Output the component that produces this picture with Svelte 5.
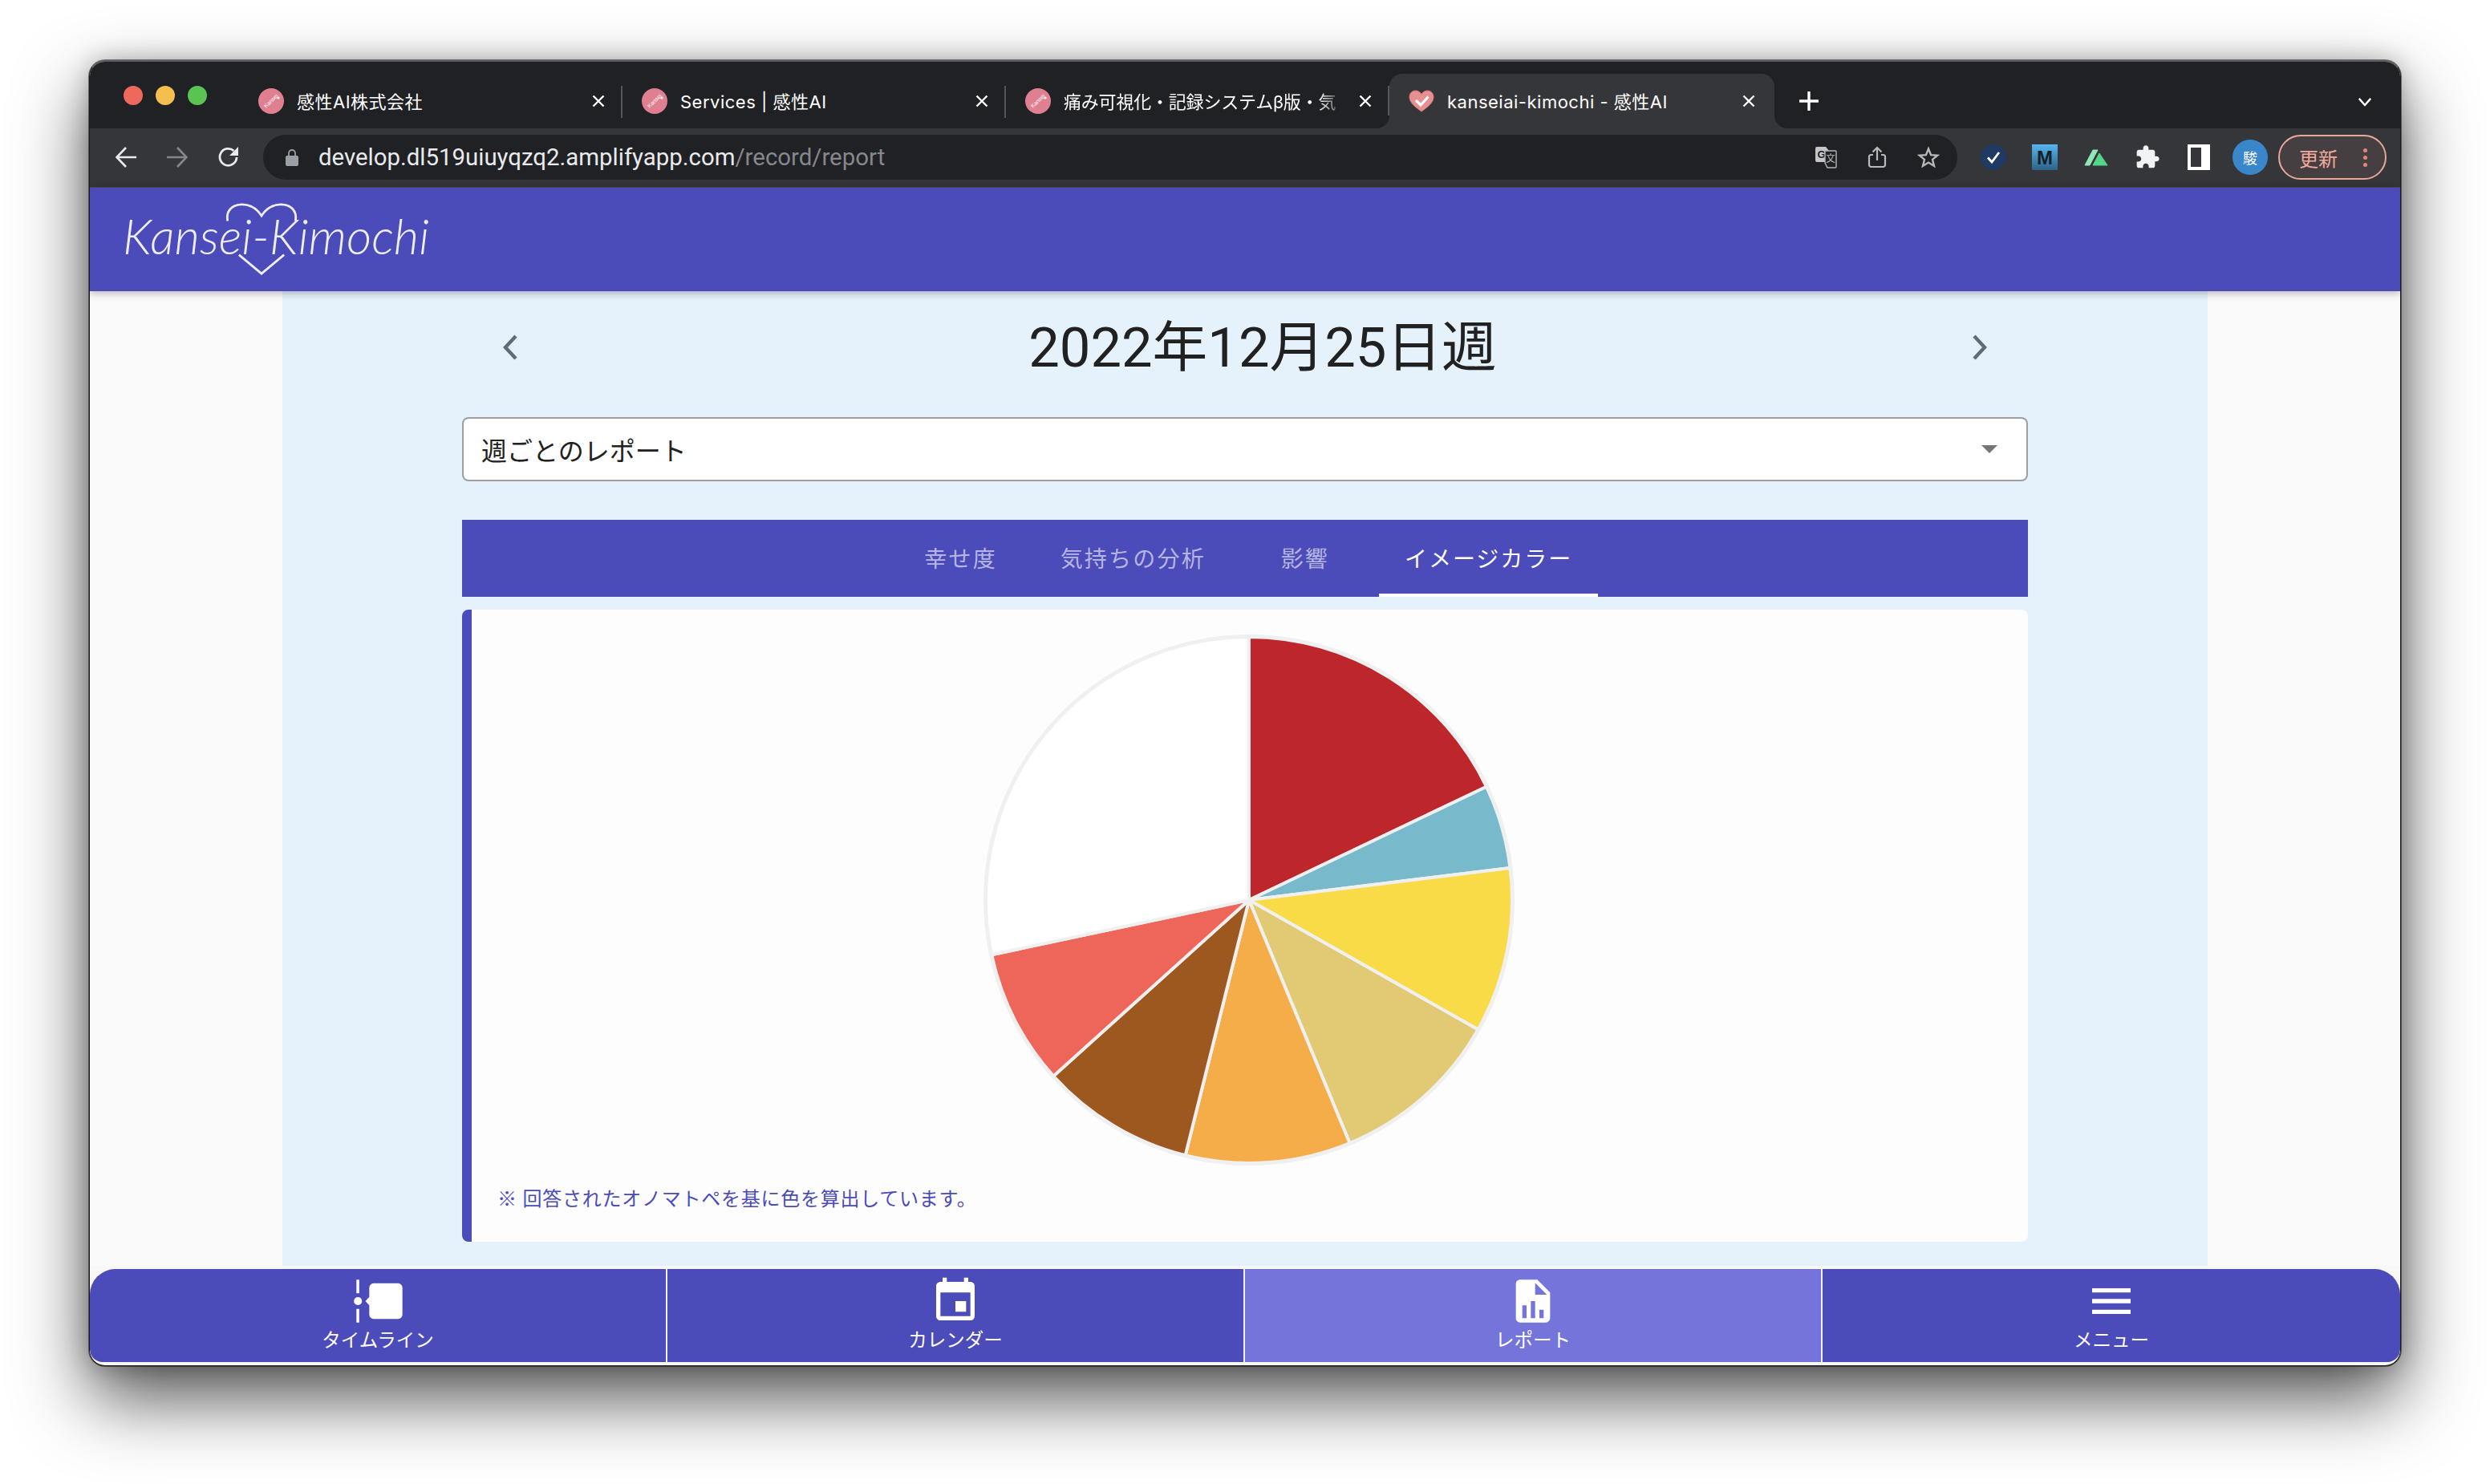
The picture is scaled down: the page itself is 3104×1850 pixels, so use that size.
<script lang="ts">
  const tabs = [
    { title: '感性AI株式会社', fade: false },
    { title: 'Services | 感性AI', fade: false },
    { title: '痛み可視化・記録システムβ版・気', fade: true }
  ];

  const reportTabs = ['幸せ度', '気持ちの分析', '影響', 'イメージカラー'];

  const navItems = [
    { label: 'タイムライン', active: false, kind: 'timeline' },
    { label: 'カレンダー', active: false, kind: 'calendar' },
    { label: 'レポート', active: true, kind: 'report' },
    { label: 'メニュー', active: false, kind: 'menu' }
  ];

  // degrees clockwise from 12 o'clock, each slice ends where the next begins
  const slices = [
    { end: 64.5, color: '#bd272b' },
    { end: 83, color: '#78bacb' },
    { end: 119.5, color: '#f9db47' },
    { end: 157.5, color: '#e2c973' },
    { end: 194, color: '#f4ad49' },
    { end: 228, color: '#9c581f' },
    { end: 258, color: '#ee665a' },
    { end: 360, color: '#ffffff' }
  ];

  const R = 328;

  function point(deg: number): string {
    const a = (deg * Math.PI) / 180;
    return `${(R * Math.sin(a)).toFixed(2)} ${(-R * Math.cos(a)).toFixed(2)}`;
  }

  function slicePath(start: number, end: number): string {
    const large = end - start > 180 ? 1 : 0;
    return `M0 0L${point(start)}A${R} ${R} 0 ${large} 1 ${point(end)}Z`;
  }
</script>

<div class="desktop">
  <div class="window">
    <div class="tabstrip">
      <div class="lights">
        <span class="light red"></span>
        <span class="light yellow"></span>
        <span class="light green"></span>
      </div>
      {#each tabs as tab}
        <div class="tab">
          <svg class="favicon" viewBox="0 0 32 32">
            <circle cx="16" cy="16" r="16" fill="#e07f90" />
            <text x="16" y="18" class="fav-text" transform="rotate(-45 16 16)">Kansei</text>
            <circle cx="25" cy="12" r="1.6" fill="#fff" />
          </svg>
          <span class="tab-title" class:fade={tab.fade}>{tab.title}</span>
          <svg class="tab-close" viewBox="0 0 16 16">
            <path d="M1.5 1.5l13 13M14.5 1.5l-13 13" stroke="#fff" stroke-width="2.4" />
          </svg>
        </div>
      {/each}
      <div class="tab current">
        <svg class="favicon" viewBox="0 0 32 32">
          <path d="M16 29C9 24 1 18 1 11c0-5 3.6-8 7.5-8 3.2 0 5.7 1.6 7.5 4.5C17.8 4.6 20.3 3 23.5 3 27.4 3 31 6 31 11c0 7-8 13-15 18z" fill="#e88f90" stroke="#d9777a" stroke-width="1" />
          <path d="M9 15l6 6 9.5-10.5" fill="none" stroke="#fff" stroke-width="3.2" />
        </svg>
        <span class="tab-title">kanseiai-kimochi - 感性AI</span>
        <svg class="tab-close" viewBox="0 0 16 16">
          <path d="M1.5 1.5l13 13M14.5 1.5l-13 13" stroke="#fff" stroke-width="2.4" />
        </svg>
      </div>
      <svg class="new-tab" viewBox="0 0 24 24">
        <path d="M12 1v22M1 12h22" stroke="#fff" stroke-width="3.4" stroke-linecap="round" />
      </svg>
      <svg class="tab-menu" viewBox="0 0 20 14">
        <path d="M2 3l8 9 8-9" fill="none" stroke="#fff" stroke-width="2.6" />
      </svg>
    </div>

    <div class="toolbar">
      <svg class="tool-icon" viewBox="0 0 28 28">
        <path d="M27 14H3M14 2L2.5 14 14 26" fill="none" stroke="#e8eaed" stroke-width="2.6" />
      </svg>
      <svg class="tool-icon" viewBox="0 0 28 28">
        <path d="M1 14h24M14 2l11.5 12L14 26" fill="none" stroke="#85878a" stroke-width="2.6" />
      </svg>
      <svg class="tool-icon" viewBox="0 0 28 28">
        <path d="M24 14a10.5 10.5 0 1 1-3.5-8" fill="none" stroke="#e8eaed" stroke-width="2.8" />
        <path d="M26 1v11H15z" fill="#e8eaed" />
      </svg>
      <div class="omnibox">
        <svg class="lock" viewBox="0 0 16 22">
          <path d="M4 9V6a4 4 0 0 1 8 0v3" fill="none" stroke="#9aa0a6" stroke-width="1.8" />
          <rect y="9" width="16" height="13" rx="2" fill="#9aa0a6" />
        </svg>
        <span class="url">develop.dl519uiuyqzq2.amplifyapp.com<span class="path">/record/report</span></span>
        <svg class="omni-icon" viewBox="0 0 28 28">
          <path d="M3 1h11l4 5v14H3a2 2 0 0 1-2-2V3a2 2 0 0 1 2-2z" fill="#c4c5c6" />
          <text x="8.5" y="15" class="g-mark">G</text>
          <path d="M13 6h13a1 1 0 0 1 1 1v19a1 1 0 0 1-1 1H16l-3-6z" fill="#202124" stroke="#b4b5b6" stroke-width="1.4" />
          <text x="20" y="20" class="bun-mark">文</text>
        </svg>
        <svg class="omni-icon" viewBox="0 0 28 28">
          <path d="M9 11H6.5A2.5 2.5 0 0 0 4 13.5v10A2.5 2.5 0 0 0 6.5 26h15a2.5 2.5 0 0 0 2.5-2.5v-10a2.5 2.5 0 0 0-2.5-2.5H19M14 18V2M8.5 7.5L14 2l5.5 5.5" fill="none" stroke="#b8b9ba" stroke-width="2.2" />
        </svg>
        <svg class="omni-icon" viewBox="0 0 28 28">
          <path d="M14 3.5l3.1 7.6 8.2.6-6.3 5.2 2 8-7-4.300-7 4.300 2-8-6.300-5.200 8.200-.6z" fill="none" stroke="#b8b9ba" stroke-width="2.4" />
        </svg>
      </div>
      <div class="extensions">
        <svg class="ext" viewBox="0 0 32 32">
          <circle cx="16" cy="16" r="16" fill="#1f3a63" />
          <path d="M9 16.5l5 5.5 9-12" fill="none" stroke="#fff" stroke-width="2.8" />
        </svg>
        <svg class="ext" viewBox="0 0 32 32">
          <defs>
            <linearGradient id="mdn" x1="0" y1="0" x2="0" y2="1">
              <stop offset="0" stop-color="#57b5ef" />
              <stop offset="1" stop-color="#2c6387" />
            </linearGradient>
          </defs>
          <rect width="32" height="32" fill="url(#mdn)" />
          <text x="16" y="25" class="m-mark">M</text>
        </svg>
        <svg class="ext" viewBox="0 0 32 32">
          <path d="M2 26L12 7h6L8 26z" fill="#92e5b6" stroke="#92e5b6" stroke-linejoin="round" />
          <path d="M12 26l8-15 10 15z" fill="#52d688" stroke="#52d688" stroke-linejoin="round" />
        </svg>
        <svg class="ext" viewBox="0 0 24 24">
          <path d="M20.5 11H19V7c0-1.1-.9-2-2-2h-4V3.5C13 2.12 11.88 1 10.5 1S8 2.12 8 3.5V5H4c-1.1 0-1.99.9-1.99 2v3.8H3.5c1.49 0 2.7 1.21 2.7 2.7s-1.21 2.7-2.7 2.7H2V20c0 1.1.9 2 2 2h3.8v-1.5c0-1.49 1.21-2.7 2.7-2.7 1.49 0 2.7 1.21 2.7 2.7V22H17c1.1 0 2-.9 2-2v-4h1.500c1.38 0 2.500-1.120 2.500-2.500S21.880 11 20.500 11z" fill="#f1f3f4" />
        </svg>
        <svg class="ext" viewBox="0 0 32 32">
          <path d="M2 0h28v32H2z M6 4v24h13V4z" fill="#fff" fill-rule="evenodd" />
        </svg>
        <span class="avatar">駿</span>
      </div>
      <div class="update">
        <span>更新</span>
        <span class="dots"><i></i><i></i><i></i></span>
      </div>
    </div>

    <div class="page">
      <header class="app-header">
        <div class="logo">
          <svg class="logo-heart" viewBox="0 0 96 96">
            <path d="M3 24C0 10 10 2 22 2c11 0 20 6 26 15C54 8 63 2 74 2c12 0 22 8 19 22" fill="none" stroke="#eeeef8" stroke-width="3" />
            <path d="M18 69l30 25 30-25" fill="none" stroke="#eeeef8" stroke-width="3" />
          </svg>
          <span class="logo-text">Kansei-Kimochi</span>
        </div>
      </header>

      <div class="body">
        <main class="content">
          <div class="week">
            <svg class="chevron" viewBox="0 0 20 32">
              <path d="M17 2L4 16l13 14" fill="none" stroke="#5f6b76" stroke-width="4.4" />
            </svg>
            <h1>2022年12月25日週</h1>
            <svg class="chevron" viewBox="0 0 20 32">
              <path d="M3 2l13 14L3 30" fill="none" stroke="#5f6b76" stroke-width="4.4" />
            </svg>
          </div>

          <div class="select">
            <span>週ごとのレポート</span>
            <span class="caret"></span>
          </div>

          <nav class="report-tabs">
            {#each reportTabs as name, i}
              <span class="report-tab" class:selected={i === 3}>{name}</span>
            {/each}
          </nav>

          <section class="card">
            <svg class="pie" viewBox="-332 -332 664 664">
              <circle r={R} fill="#fff" stroke="#f0f0f0" stroke-width="6" />
              {#each slices as s, i}
                <path d={slicePath(i === 0 ? 0 : slices[i - 1].end, s.end)} fill={s.color} stroke="#f0f0f0" stroke-width="4" stroke-linejoin="round" />
              {/each}
            </svg>
            <p class="note">※ 回答されたオノマトペを基に色を算出しています。</p>
          </section>
        </main>
      </div>

      <footer class="bottom-nav">
        {#each navItems as item}
          <div class="nav-item" class:active={item.active}>
            <svg class="nav-icon" viewBox="0 0 24 24" fill="#fff">
              {#if item.kind === 'timeline'}
                <path d="M2 2h1.3v6.3H2zM2 15.7h1.3V22H2z" />
                <circle cx="2.7" cy="12" r="1.9" />
                <path d="M10 3.7h11.5a2 2 0 0 1 2 2v12.6a2 2 0 0 1-2 2H10a2 2 0 0 1-2-2v-4.300L6.200 12 8 10V5.700a2 2 0 0 1 2-2z" />
              {:else if item.kind === 'calendar'}
                <path d="M17 12h-5v5h5v-5zM16 1v2H8V1H6v2H5c-1.11 0-1.99.9-1.99 2L3 19c0 1.1.89 2 2 2h14c1.1 0 2-.9 2-2V5c0-1.1-.9-2-2-2h-1V1h-2zm3 18H5V8h14v11z" />
              {:else if item.kind === 'report'}
                <path d="M13 9h5.5L13 3.5V9M6 2h8l6 6v12a2 2 0 0 1-2 2H6c-1.11 0-2-.9-2-2V4c0-1.11.89-2 2-2m1 18h2v-6H7v6m4 0h2v-8h-2v8m4 0h2v-4h-2v4z" />
              {:else}
                <path d="M3 18h18v-2H3v2zm0-5h18v-2H3v2zm0-7v2h18V6H3z" />
              {/if}
            </svg>
            <span class="nav-label">{item.label}</span>
          </div>
        {/each}
      </footer>
    </div>
  </div>
</div>

<style>
  :global(body) {
    margin: 0;
    background: #fff;
    font-family: Roboto, 'Noto Sans CJK JP', sans-serif;
  }

  .desktop {
    box-sizing: border-box;
    height: 1850px;
    padding: 75px 0 0 111px;
    overflow: hidden;
    background: #fff;
  }

  .window {
    box-sizing: border-box;
    width: 2882px;
    height: 1628px;
    display: flex;
    flex-direction: column;
    overflow: hidden;
    border: 1px solid #1a1a1a;
    border-top: 2px solid #5c5d60;
    border-radius: 20px;
    background: #f7f7f7;
    box-shadow:
      0 0 0 1px rgba(0, 0, 0, 0.45),
      0 0 30px rgba(0, 0, 0, 0.25),
      0 40px 90px rgba(0, 0, 0, 0.68);
  }

  .tabstrip {
    flex: 0 0 83px;
    display: flex;
    align-items: flex-start;
    background: #202124;
    color: #fff;
    font-family: Inter, 'Noto Sans CJK JP', sans-serif;
    font-size: 22px;
    letter-spacing: 0.5px;
  }

  .lights {
    flex: 0 0 186px;
    box-sizing: border-box;
    padding: 30px 0 0 42px;
    display: flex;
    gap: 16px;
  }

  .light {
    width: 24px;
    height: 24px;
    border-radius: 50%;
  }

  .red {
    background: #ee685b;
  }

  .yellow {
    background: #f5bf4f;
  }

  .green {
    background: #5ac452;
  }

  .tab {
    flex: 0 0 478px;
    min-width: 0;
    box-sizing: border-box;
    height: 83px;
    padding: 15px 24px 0;
    display: flex;
    align-items: center;
    gap: 16px;
    position: relative;
  }

  .tab:not(.current)::after {
    content: '';
    position: absolute;
    right: 0;
    top: 30px;
    height: 40px;
    width: 2px;
    background: #55565a;
  }

  .tab.current {
    flex-basis: 480px;
    background: #35363a;
    border-radius: 16px 16px 0 0;
    margin-top: 15px;
    height: 68px;
    padding-top: 0;
  }

  /* flared feet of the active tab */
  .tab.current::before,
  .tab.current::after {
    content: '';
    position: absolute;
    bottom: 0;
    width: 16px;
    height: 16px;
  }

  .tab.current::before {
    left: -16px;
    background: radial-gradient(circle at 0 0, #202124 15.5px, #35363a 16.5px);
  }

  .tab.current::after {
    right: -16px;
    background: radial-gradient(circle at 100% 0, #202124 15.5px, #35363a 16.5px);
  }

  .favicon {
    flex: none;
    width: 32px;
    height: 32px;
  }

  .fav-text {
    font-family: 'Liberation Sans', sans-serif;
    font-size: 7px;
    letter-spacing: 0;
    fill: #fff;
    text-anchor: middle;
  }

  .tab-title {
    flex: 1;
    min-width: 0;
    margin-bottom: 3px;
    white-space: nowrap;
    overflow: hidden;
  }

  .tab-title.fade {
    letter-spacing: -0.2px;
    mask-image: linear-gradient(to right, #000 90%, transparent 100%);
  }

  .tab-close {
    flex: none;
    width: 16px;
    height: 16px;
    margin-right: -2px;
  }

  .tab.current .tab-close {
    margin-right: 0;
  }

  .new-tab {
    flex: none;
    width: 24px;
    height: 24px;
    margin: 37px 0 0 31px;
  }

  .tab-menu {
    flex: none;
    width: 18px;
    height: 13px;
    margin: 43px 35px 0 auto;
  }

  .toolbar {
    flex: 0 0 73px;
    box-sizing: border-box;
    padding: 8px 0 9px 31px;
    display: flex;
    align-items: center;
    background: #35363a;
    border-bottom: 1px solid #4d4e52;
  }

  .tool-icon {
    flex: none;
    width: 28px;
    height: 28px;
    margin-right: 36px;
  }

  .omnibox {
    flex: 0 0 2112px;
    height: 56px;
    margin-left: -7px;
    box-sizing: border-box;
    padding: 0 22px 0 28px;
    display: flex;
    align-items: center;
    border-radius: 28px;
    background: #202124;
  }

  .lock {
    flex: none;
    width: 16px;
    height: 22px;
  }

  .url {
    flex: 1;
    margin-left: 25px;
    font-size: 29.4px;
    color: #e8eaed;
    white-space: nowrap;
  }

  .path {
    color: #85878a;
  }

  .omni-icon {
    flex: none;
    width: 28px;
    height: 28px;
    margin-left: 36px;
  }

  .g-mark {
    font-family: 'Liberation Sans', sans-serif;
    font-size: 13px;
    font-weight: 700;
    fill: #202124;
    text-anchor: middle;
  }

  .bun-mark {
    font-family: 'Noto Sans CJK JP', sans-serif;
    font-size: 12px;
    fill: #b4b5b6;
    text-anchor: middle;
  }

  .m-mark {
    font-family: 'Liberation Sans', sans-serif;
    font-size: 24px;
    font-weight: 700;
    fill: #14212b;
    text-anchor: middle;
  }

  .extensions {
    margin-left: 29px;
    display: flex;
    align-items: center;
    gap: 32px;
  }

  .ext {
    flex: none;
    width: 32px;
    height: 32px;
  }

  .avatar {
    width: 44px;
    height: 44px;
    margin-left: -6px;
    border-radius: 50%;
    background: #3a86cb;
    color: #fff;
    font-size: 18px;
    display: flex;
    align-items: center;
    justify-content: center;
  }

  .update {
    flex: none;
    box-sizing: border-box;
    width: 135px;
    height: 56px;
    margin-left: 13px;
    padding: 0 22px 0 24px;
    display: flex;
    align-items: center;
    justify-content: space-between;
    border: 2px solid #e8a79c;
    border-radius: 28px;
    background: #463f42;
    color: #efa99d;
    font-size: 24px;
  }

  .dots {
    display: flex;
    flex-direction: column;
    gap: 4px;
  }

  .dots i {
    width: 5px;
    height: 5px;
    border-radius: 50%;
    background: #e5857a;
  }

  .page {
    flex: 1;
    min-height: 0;
    display: flex;
    flex-direction: column;
  }

  .app-header {
    flex: 0 0 129px;
    position: relative;
    z-index: 1;
    box-sizing: border-box;
    padding-left: 41px;
    display: flex;
    align-items: center;
    background: #4b4bb9;
    box-shadow: 0 2px 10px rgba(0, 0, 0, 0.3);
  }

  .logo {
    position: relative;
    height: 129px;
    display: flex;
    align-items: center;
  }

  .logo-heart {
    position: absolute;
    left: 128px;
    top: 17px;
    width: 90px;
    height: 94px;
  }

  .logo-text {
    position: relative;
    top: -5px;
    font-family: Lato, sans-serif;
    font-style: italic;
    font-weight: 300;
    font-size: 60.8px;
    color: #eeeef8;
  }

  .body {
    flex: 1;
    min-height: 0;
    display: flex;
    justify-content: center;
    background: #fafafa;
  }

  .content {
    box-sizing: border-box;
    width: 2400px;
    padding: 0 224px;
    background: #e5f1fb;
    display: flex;
    flex-direction: column;
  }

  .week {
    height: 157px;
    display: flex;
    align-items: center;
    justify-content: space-between;
    box-sizing: border-box;
    padding: 0 50px 18px 50px;
  }

  .chevron {
    flex: none;
    width: 20px;
    height: 32px;
  }

  h1 {
    margin: 0 0 12px 44px;
    font-size: 68.7px;
    font-weight: 400;
    color: #212121;
    white-space: nowrap;
  }

  .select {
    flex: 0 0 80px;
    box-sizing: border-box;
    padding: 0 22px;
    display: flex;
    align-items: center;
    justify-content: space-between;
    border: 2px solid #9e9e9e;
    border-radius: 8px;
    background: #fff;
    color: #212121;
    font-size: 32px;
  }

  .caret {
    margin-right: 14px;
    border-left: 10px solid transparent;
    border-right: 10px solid transparent;
    border-top: 10px solid #757575;
  }

  .report-tabs {
    flex: 0 0 96px;
    margin-top: 48px;
    padding-left: 6px;
    display: flex;
    justify-content: center;
    gap: 12px;
    background: #4b4bb9;
  }

  .report-tab {
    box-sizing: border-box;
    min-width: 160px;
    padding: 0 32px 2px;
    display: flex;
    align-items: center;
    justify-content: center;
    font-size: 28px;
    letter-spacing: 2.2px;
    color: rgba(255, 255, 255, 0.6);
  }

  .report-tab.selected {
    color: #fff;
    letter-spacing: 2px;
    border-bottom: 4px solid #fff;
    padding-bottom: 0;
    padding-top: 2px;
  }

  .card {
    flex: 0 0 788px;
    box-sizing: border-box;
    margin-top: 16px;
    padding-top: 30px;
    display: flex;
    flex-direction: column;
    align-items: center;
    background: #fdfdfd;
    border-left: 12px solid #4b4bb9;
    border-radius: 8px;
  }

  .pie {
    flex: none;
    width: 664px;
    height: 664px;
    margin-left: -2px;
  }

  .note {
    align-self: flex-start;
    margin: 24px 0 0 32px;
    color: #4b4bb9;
    font-size: 24px;
    line-height: 34px;
    letter-spacing: 0.75px;
  }

  .bottom-nav {
    flex: 0 0 116px;
    margin: 4px 0 4px;
    display: grid;
    grid-template-columns: 720px 720px 720px 1fr;
    border-radius: 32px 32px 16px 16px;
    overflow: hidden;
    background: #4b4bb9;
  }

  .nav-item {
    box-sizing: border-box;
    display: flex;
    flex-direction: column;
    align-items: center;
    color: #fff;
    padding-top: 8px;
    border-right: 2px solid #f3f3f3;
  }

  .nav-item:last-child {
    border-right: none;
  }

  .nav-item.active {
    background: #7474db;
  }

  .nav-icon {
    width: 64px;
    height: 64px;
    flex: none;
  }

  .nav-label {
    font-size: 23.5px;
    line-height: 32px;
    margin-top: 1px;
  }
</style>
